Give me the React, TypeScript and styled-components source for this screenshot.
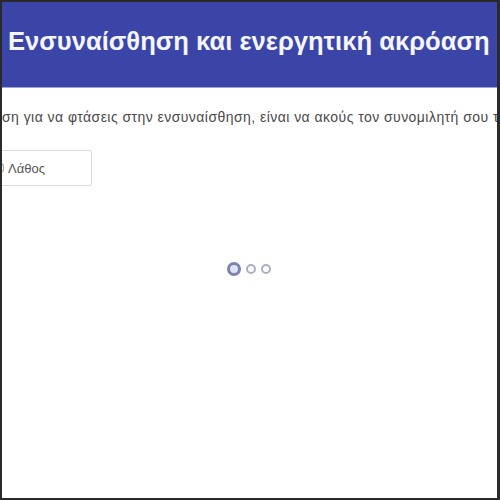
import React from 'react'
import styled, { createGlobalStyle } from 'styled-components'

const GlobalStyle = createGlobalStyle`
    html, body {
        margin: 0;
        padding: 0;
        background: #ffffff;
    }
`

const Frame = styled.div`
    box-sizing: border-box;
    width: 500px;
    height: 500px;
    border: 2px solid #2a2a2a;
    border-right-width: 3px;
    overflow: hidden;
    display: flex;
    flex-direction: column;
    font-family: 'Liberation Sans', Arial, sans-serif;
`

const TitleBar = styled.header`
    height: 86px;
    background-color: #3a45a7;
    border-bottom: 1px solid #9ea6dc;
    display: flex;
    align-items: center;
    padding: 0 0 6px 6px;
    box-sizing: border-box;
`

const Title = styled.h1`
    margin: 0;
    color: #f4f5ff;
    font-size: 25.6px;
    font-weight: 700;
    white-space: nowrap;
`

const Content = styled.main`
    display: flex;
    flex-direction: column;
    padding-top: 20px;
`

const Question = styled.p`
    margin: 0;
    white-space: nowrap;
    font-size: 14px;
    letter-spacing: 0.45px;
    color: #4a4a4a;
    line-height: 18px;
`

const Answers = styled.div`
    display: flex;
    margin-top: 24px;
`

const Answer = styled.div`
    box-sizing: border-box;
    width: 90px;
    height: 36px;
    border: 1px solid #dcdcdc;
    border-left: none;
    border-radius: 0 3px 3px 0;
    display: flex;
    align-items: center;
    padding-left: 3px;
    font-size: 13px;
    color: #555555;
    gap: 4px;
`

const Radio = styled.span`
    width: 3px;
    height: 8px;
    border: 1px solid #999;
    border-left: none;
    border-radius: 0 4px 4px 0;
    margin-left: -5px;
`

const Loader = styled.div`
    display: flex;
    justify-content: center;
    align-items: center;
    gap: 5px;
    margin-top: 76px;
    padding-right: 2px;
`

const Dot = styled.span<{ size: number; active?: boolean }>`
    box-sizing: border-box;
    width: ${(p) => p.size}px;
    height: ${(p) => p.size}px;
    border-radius: 50%;
    border: ${(p) => (p.active ? 3 : 2)}px solid ${(p) => (p.active ? '#7a84ac' : '#a9aec8')};
    background: ${(p) => (p.active ? '#dfe3f4' : '#ffffff')};
`

const App = () => {
    return (
        <>
            <GlobalStyle />
            <Frame>
                <TitleBar>
                    <Title>Ενσυναίσθηση και ενεργητική ακρόαση</Title>
                </TitleBar>
                <Content>
                    <Question>
                        ση για να φτάσεις στην ενσυναίσθηση, είναι να ακούς τον συνομιλητή σου τ
                    </Question>
                    <Answers>
                        <Answer>
                            <Radio />
                            Λάθος
                        </Answer>
                    </Answers>
                    <Loader>
                        <Dot size={14} active />
                        <Dot size={10} />
                        <Dot size={10} />
                    </Loader>
                </Content>
            </Frame>
        </>
    )
}

export default App
